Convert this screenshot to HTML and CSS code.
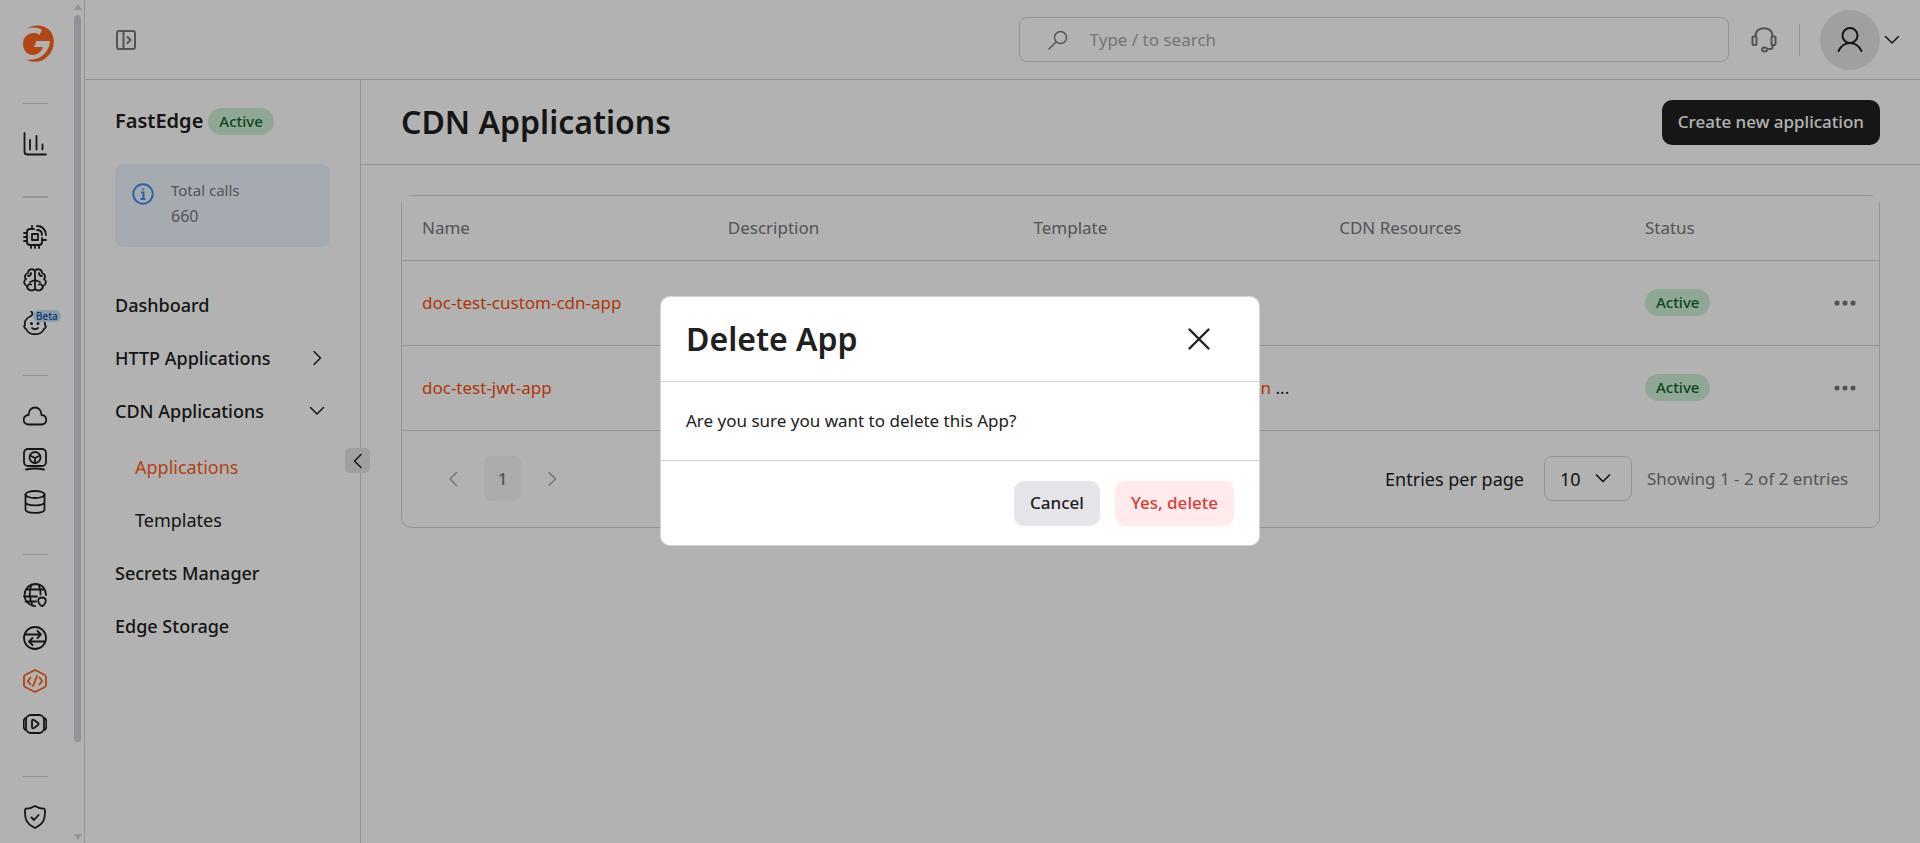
FILE: index.html
```html
<!DOCTYPE html>
<html lang="en">
<head>
<meta charset="utf-8">
<title>CDN Applications</title>
<link rel="stylesheet" href="styles.css">
</head>
<body>
<div class="app">
  <aside class="rail">
    <a class="logo" href="#" aria-label="Home">
      <svg width="32" height="38" viewBox="0 0 32 38"><path fill="#ff651f" d="M3 4C12-2 23 0 28 7c5 8 3 19-4 25C18 38 9 38 3 34.500c8 1 15-1.500 19-6.500 3-4 4.500-7 5-12H13.500L11 22h9c-1 4-5 8-10 8C4 30 0 25 0 19 0 12 5 8 11 8c2.500 0 4 .8 5.500 2L19 5C14 2 8 2 3 4z"/></svg>
    </a>
    <nav class="rail-nav" aria-label="Products">
      <div class="rail-group">
        <a href="#" aria-label="Statistics"><svg class="icon" viewBox="0 0 24 24"><path d="M1.500 1v18.500q0 3 3 3H23M7 8v9.500M13.500 4v13.500M19.500 12.500v5"/></svg></a>
      </div>
      <div class="rail-group rail-group-strong">
        <a href="#" aria-label="Compute"><svg class="icon" viewBox="0 0 24 24"><path d="M11 4H7Q4 4 4 7v10q0 3 3 3h9q3 0 3-3v-4M9 9h6v6H9zM9 4V1M8 20v3M12 20v3M16 20v3M4 8H1M4 12H1M4 16H1M19 15h4M14 1q8 0 9 9M14 5q5 0 5 5"/></svg></a>
        <a href="#" aria-label="AI"><svg class="icon" viewBox="0 0 24 24"><path d="M12 3c-2-3-7-2-7 2-3 1-4 4-2 6-3 2-2 6 1 7 0 4 5 6 8 3zM12 3c2-3 7-2 7 2 3 1 4 4 2 6 3 2 2 6-1 7 0 4-5 6-8 3zM8 5q0 3-3 3M12 12l-5 2M5 17.500q1-2 3-1M16 5q0 3 3 3M12 12l5 2M19 17.500q-1-2-3-1"/></svg></a>
        <a class="beta-item" href="#" aria-label="Assistant, Beta"><svg class="icon" viewBox="0 0 24 24"><path d="M8 5C3 7 1 11 2 14q-2 2 1 4c3 7 15 7 18 0q3-2 1-4c0-5-3-8-7-9M8 0q3 3 0 5M9 17q3 2.500 6 0"/><path d="M8.500 12.500v.1M15 12.500v.1" stroke-width="3"/></svg><span class="beta">Beta</span></a>
      </div>
      <div class="rail-group">
        <a href="#" aria-label="Cloud"><svg class="icon" viewBox="0 0 24 24"><path d="M6 20.500C-1 21-1 11 5.500 11c0-10 13-10 13 0 6.500 0 6.500 10-.5 9.500z"/></svg></a>
        <a href="#" aria-label="Bare metal"><svg class="icon" viewBox="0 0 24 24"><rect x="1" y="2" width="22" height="17" rx="4"/><circle cx="12" cy="10.500" r="5.500"/><path d="M12 16v-5L7 8.500M12 11l5-2.500M3 22.500q9-2 18 0"/></svg></a>
        <a href="#" aria-label="Storage"><svg class="icon" viewBox="0 0 24 24"><ellipse cx="12" cy="4.500" rx="9.500" ry="3.500"/><path d="M2.500 4.500v15c0 4.500 19 4.500 19 0v-15M2.500 12c0 4.500 19 4.500 19 0"/></svg></a>
      </div>
      <div class="rail-group">
        <a href="#" aria-label="DNS"><svg class="icon" viewBox="0 0 24 24"><path d="M12 23C-2 22-2 2 12 1c8 0 11 6 11 11M3 6.500h18M1 13.500h13M2.500 18.500H13M8.500 1.500q-4 10 1 21M15.500 1.500q2.500 5 2 10"/><path d="M19 23.500c-6-5-4-9 0-9s6 4 0 9z"/></svg></a>
        <a href="#" aria-label="CDN"><svg class="icon" viewBox="0 0 24 24"><circle cx="12" cy="12" r="11"/><path d="M2 8.500h16M14.500 5l3.500 3.500-3.500 3.500M22 15.500H6M9.500 12L6 15.500 9.500 19"/></svg></a>
        <a class="current" href="#" aria-label="FastEdge" aria-current="page"><svg class="icon" viewBox="0 0 24 24"><path d="M12 1l9.500 4.800Q23 6.500 23 8v8q0 1.500-1.500 2.200L12 23l-9.500-4.800Q1 17.500 1 16V8q0-1.500 1.500-2.200zM7.500 8.500L4.800 12l2.700 3.500M16.500 8.500l2.700 3.500-2.700 3.500M14 7l-4 10"/></svg></a>
        <a href="#" aria-label="Video streaming"><svg class="icon" viewBox="0 0 24 24"><rect x="3" y="3" width="18" height="18" rx="5"/><path d="M9 9v6q0 2 2 1l4-3q1-1 0-2l-4-3q-2-1-2 1zM3 6Q1 6 .700 9v6Q1 18 3 18M21 6q2 0 2.300 3v6q-.3 3-2.300 3"/></svg></a>
      </div>
      <div class="rail-group">
        <a href="#" aria-label="Security"><svg class="icon" viewBox="0 0 24 24"><path d="M12 1q5 3 9 2.500 1 .5 1 2c0 9-1 13-10 17.500C3 18.500 2 14.500 2 5.500q0-1.500 1-2Q7 4 12 1zM8.500 12.500l2.500 2.500 4.500-5"/></svg></a>
      </div>
    </nav>
    <div class="scroll" aria-hidden="true"><i class="scroll-up"></i><i class="scroll-thumb"></i><i class="scroll-down"></i></div>
  </aside>

  <div class="shell">
    <header class="topbar">
      <button class="plain" aria-label="Expand navigation"><svg class="icon muted" viewBox="0 0 20 20" width="20" height="20"><rect x="1" y="1" width="18" height="18" rx="2"/><path d="M7.500 1v18M11.500 7l3 3-3 3"/></svg></button>
      <div class="top-right">
        <label class="search">
          <svg class="icon muted" viewBox="0 0 20 20"><circle cx="12.500" cy="7.500" r="6"/><path d="M8.200 11.800L1 19"/></svg>
          <input type="search" placeholder="Type / to search" aria-label="Search">
        </label>
        <button class="plain headset" aria-label="Support"><svg class="icon muted" viewBox="0 0 26 26" width="26" height="26"><path d="M4.500 9C4.500-1.500 21.500-1.500 21.500 9M21.500 18v2q0 2-2 2H16"/><rect x="1.500" y="9.500" width="4" height="8.500" rx="1"/><rect x="20.500" y="9.500" width="4" height="8.500" rx="1"/><ellipse cx="13.500" cy="22.500" rx="2.500" ry="2"/></svg></button>
        <button class="plain account" aria-label="Account">
          <span class="avatar"><svg class="icon" viewBox="0 0 26 26" width="26" height="26"><circle cx="13" cy="8.500" r="7.500"/><path d="M1.500 24C4 19 8 16 13 16S22 19 24.500 24"/></svg></span>
          <svg class="icon thin" viewBox="0 0 16 10" width="16" height="10"><path d="M1.500 1.500l6.500 6.500 6.500-6.500"/></svg>
        </button>
      </div>
    </header>

    <div class="body">
      <aside class="side">
        <div class="product"><strong>FastEdge</strong><span class="pill">Active</span></div>
        <div class="calls">
          <svg class="info" viewBox="0 0 22 22" width="22" height="22"><circle cx="11" cy="11" r="9.700"/><path d="M9 9.500h2.500V16M8.500 16h5M11 5.500v1.500"/></svg>
          <div><div class="calls-label">Total calls</div><div>660</div></div>
        </div>
        <nav class="menu" aria-label="FastEdge">
          <a href="#">Dashboard</a>
          <a href="#">HTTP Applications<svg class="icon thin" viewBox="0 0 16 16" width="16" height="16"><path d="M5 1.500l6.500 6.500-6.500 6.500"/></svg></a>
          <a href="#">CDN Applications<svg class="icon thin" viewBox="0 0 16 16" width="16" height="16"><path d="M1.500 4.500l6.500 6.500 6.500-6.500"/></svg></a>
          <div class="submenu">
            <a class="current" href="#" aria-current="page">Applications</a>
            <a href="#">Templates</a>
          </div>
          <a href="#">Secrets Manager</a>
          <a href="#">Edge Storage</a>
        </nav>
        <button class="collapse" aria-label="Collapse menu"><svg class="icon thin" viewBox="0 0 16 16" width="16" height="16"><path d="M11 1.500l-6.500 6.500 6.500 6.500"/></svg></button>
      </aside>

      <main class="main">
        <div class="page-head"><h1>CDN Applications</h1><button class="btn btn-dark">Create new application</button></div>
        <section class="card">
          <table>
            <thead><tr><th class="wide">Name</th><th class="wide">Description</th><th class="wide">Template</th><th class="wide">CDN Resources</th><th>Status</th><th class="actions"></th></tr></thead>
            <tbody>
              <tr><td><a href="#">doc-test-custom-cdn-app</a></td><td></td><td></td><td></td><td><span class="pill">Active</span></td><td class="actions"><button class="plain" aria-label="More actions"><svg class="dots" viewBox="0 0 22 6" width="22" height="6"><circle cx="3" cy="3" r="2.600"/><circle cx="11" cy="3" r="2.600"/><circle cx="19" cy="3" r="2.600"/></svg></button></td></tr>
              <tr><td><a href="#">doc-test-jwt-app</a></td><td></td><td class="template"><a href="#">n</a> ...</td><td></td><td><span class="pill">Active</span></td><td class="actions"><button class="plain" aria-label="More actions"><svg class="dots" viewBox="0 0 22 6" width="22" height="6"><circle cx="3" cy="3" r="2.600"/><circle cx="11" cy="3" r="2.600"/><circle cx="19" cy="3" r="2.600"/></svg></button></td></tr>
            </tbody>
          </table>
          <footer class="pager">
            <div class="pages">
              <button class="plain" aria-label="Previous page"><svg class="icon thin pale" viewBox="0 0 16 16" width="16" height="16"><path d="M11.500 1.500l-6.500 6.500 6.500 6.500"/></svg></button>
              <button class="page">1</button>
              <button class="plain" aria-label="Next page"><svg class="icon thin pale" viewBox="0 0 16 16" width="16" height="16"><path d="M5 1.500l6.500 6.500-6.500 6.500"/></svg></button>
            </div>
            <div class="entries">
              <label for="per-page">Entries per page</label>
              <span class="select"><select id="per-page"><option>10</option></select><svg class="icon" viewBox="0 0 16 16" width="16" height="16"><path d="M1.500 5l6.500 6.500L14.500 5"/></svg></span>
              <span class="showing">Showing 1 - 2 of 2 entries</span>
            </div>
          </footer>
        </section>
      </main>
    </div>
  </div>
</div>

<div class="overlay">
  <div class="modal" role="dialog" aria-modal="true" aria-labelledby="modal-title">
    <div class="modal-head"><h2 id="modal-title">Delete App</h2><button class="plain" aria-label="Close"><svg class="icon close" viewBox="0 0 22 22" width="22" height="22"><path d="M1.500 1.500l19 19M20.500 1.500l-19 19"/></svg></button></div>
    <p class="modal-body">Are you sure you want to delete this App?</p>
    <div class="modal-foot"><button class="btn btn-grey">Cancel</button><button class="btn btn-red">Yes, delete</button></div>
  </div>
</div>
</body>
</html>
```
FILE: styles.css
```css
* { box-sizing: border-box; }
body {
  margin: 0;
  font: 17px/24px "Noto Sans", sans-serif;
  color: #202020;
  background: #fff;
  --line: #d4d3d9;
  --orange: #ff6019;
}
a { color: inherit; text-decoration: none; }
button, input, select { font: inherit; color: inherit; }
svg { display: block; flex: none; }
h1, h2, p { margin: 0; }
h1, h2 { font-size: 32px; line-height: 44px; font-weight: 600; }

.icon { fill: none; stroke: currentColor; stroke-width: 2; stroke-linecap: round; stroke-linejoin: round; }
.thin { stroke-width: 1.5; }
.muted { color: #79777f; }
.pale { color: #a9a7ae; }
.plain { display: flex; align-items: center; justify-content: center; padding: 0; border: 0; background: none; }

.app { display: flex; height: 100vh; overflow: hidden; }

.rail { position: relative; flex: none; width: 85px; padding: 25px 0 0 23px; border-right: 1px solid var(--line); overflow: hidden; }
.logo { display: block; height: 78px; }
.rail-nav { width: 25px; }
.rail-group { display: flex; flex-direction: column; align-items: flex-start; gap: 19px; padding: 28px 0 40px; border-top: 1px solid var(--line); }
.rail-group-strong { border-top-width: 2px; padding-top: 27px; }
.rail-group .icon { width: 24px; height: 24px; stroke-width: 1.8; }
.current { color: var(--orange); }
.beta-item { position: relative; }
.beta { position: absolute; left: 10px; top: -1px; padding: 0 3px; border-radius: 6px; background: #c3dffa; color: #124f96; font-size: 10px; line-height: 12px; font-weight: 500; }
.scroll { position: absolute; top: 4px; right: 3px; bottom: 3px; width: 7px; display: flex; flex-direction: column; align-items: center; }
.scroll-up, .scroll-down { border: 4px solid transparent; }
.scroll-up { border-top: 0; border-bottom: 6px solid #d4d1d8; }
.scroll-down { border-bottom: 0; border-top: 6px solid #d4d1d8; }
.scroll-thumb { width: 7px; height: 87%; margin: 5px 0 auto; border-radius: 4px; background: #d4d1d8; }

.shell { flex: 1; min-width: 0; display: flex; flex-direction: column; }
.topbar { flex: none; display: flex; align-items: center; justify-content: space-between; height: 80px; padding: 0 20px 0 31px; border-bottom: 1px solid var(--line); }
.top-right { display: flex; align-items: center; }
.search { display: flex; align-items: center; gap: 22px; width: 37vw; height: 45px; padding: 0 28px; border: 1px solid var(--line); border-radius: 8px; }
.search .icon { width: 20px; height: 20px; stroke-width: 1.5; }
.search input { flex: 1; min-width: 0; padding: 0; border: 0; outline: 0; background: none; }
.search input::placeholder { color: #a9a7ae; }
.headset { margin: 0 22px; }
.account { gap: 4px; height: 32px; padding-left: 20px; border-left: 1px solid var(--line); }
.avatar { display: flex; align-items: center; justify-content: center; width: 60px; height: 60px; border-radius: 50%; background: #e6e5e9; }

.body { flex: 1; min-height: 0; display: flex; }
.side { position: relative; flex: none; width: 276px; padding: 27px 30px; border-right: 1px solid var(--line); }
.product { display: flex; align-items: center; gap: 5px; height: 28px; margin-bottom: 29px; font-size: 20px; }
.product strong { font-weight: 600; }
.pill { display: inline-block; padding: 0 11px; border-radius: 14px; background: #d0f0d6; color: #11662f; font-size: 15px; line-height: 27px; font-weight: 500; }
.calls { display: flex; gap: 17px; min-height: 83px; padding: 13px 17px; border-radius: 8px; background: #eef5ff; color: #79777f; font-size: 16px; line-height: 26px; }
.calls-label { font-size: 15px; }
.info { margin-top: 6px; fill: none; stroke: #3f8fee; stroke-width: 2; }
.menu { margin-top: 31px; font-size: 18px; font-weight: 500; }
.menu a { display: flex; align-items: center; justify-content: space-between; height: 53px; padding-right: 5px; }
.submenu { padding: 3px 0 0 20px; font-weight: 400; }
.collapse { position: absolute; top: 368px; right: -10px; display: flex; align-items: center; justify-content: center; width: 25px; height: 25px; padding: 0; border: 0; border-radius: 5px; background: #e6e5e9; }

.main { flex: 1; min-width: 0; }
.page-head { display: flex; align-items: center; justify-content: space-between; height: 85px; padding: 0 40px; border-bottom: 1px solid var(--line); }
.btn { height: 45px; padding: 0 16px; border: 0; border-radius: 10px; font-weight: 500; }
.btn-dark { background: #202020; color: #fff; }
.card { margin: 30px 40px 0; border: 1px solid var(--line); border-radius: 10px; }
table { width: 100%; table-layout: fixed; border-collapse: collapse; background: #fff; }
th, td { padding: 0 20px; border-bottom: 1px solid var(--line); text-align: left; }
th { height: 64px; color: #79777f; font-weight: 400; }
td { height: 85px; }
td a { color: #fa4f0b; }
.wide { width: 20.7%; }
.template { padding-right: 30px; text-align: right; }
.actions { width: 9%; padding-right: 23px; }
.actions .plain { margin-left: auto; }
.dots { fill: #79777f; }
.pager { display: flex; align-items: center; justify-content: space-between; height: 96px; padding: 0 25px 0 43px; }
.pages, .entries { display: flex; align-items: center; }
.pages { gap: 23px; }
.page { width: 37px; height: 45px; padding: 0; border: 0; border-radius: 8px; background: #f5f4f6; color: #79777f; font-weight: 500; }
.entries label { margin-right: 20px; font-size: 18px; }
.select { position: relative; margin-right: 15px; }
.select select { width: 88px; height: 45px; padding: 0 15px; border: 1px solid var(--line); border-radius: 8px; background: none; font-size: 18px; appearance: none; }
.select .icon { position: absolute; right: 21px; top: 14px; pointer-events: none; stroke-width: 1.7; }
.showing { min-width: 207px; color: #79777f; }

.overlay { position: fixed; inset: 0; display: flex; align-items: center; justify-content: center; padding-bottom: 2px; background: rgba(0, 0, 0, 0.3); }
.modal { width: 600px; border: 1px solid var(--line); border-radius: 10px; background: #fff; }
.modal-head { display: flex; align-items: center; justify-content: space-between; height: 85px; padding: 0 49px 0 25px; border-bottom: 1px solid var(--line); }
.close { stroke-width: 2.4; }
.modal-body { padding: 27px 25px; }
.modal-foot { display: flex; justify-content: flex-end; gap: 15px; padding: 20px 25px 19px; border-top: 1px solid var(--line); }
.btn-grey { background: #e5e4e9; }
.btn-red { background: #ffebeb; color: #e23a35; }
```
